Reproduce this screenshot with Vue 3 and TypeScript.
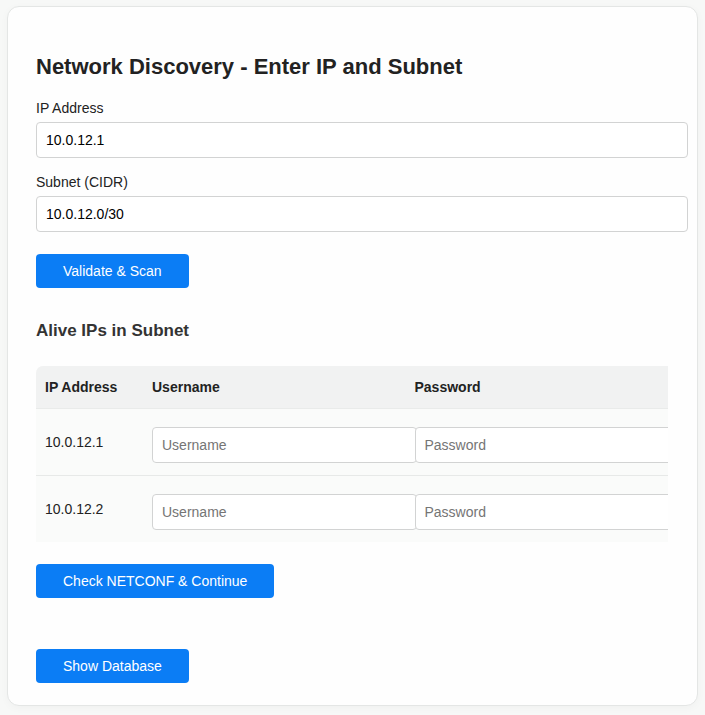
<script setup lang="ts">
import { reactive, ref } from 'vue'

interface Host {
  ip: string
  username: string
  password: string
}

const ipAddress = ref('10.0.12.1')
const subnet = ref('10.0.12.0/30')
const hosts = reactive<Host[]>([
  { ip: '10.0.12.1', username: '', password: '' },
  { ip: '10.0.12.2', username: '', password: '' },
])
</script>

<template>
  <main class="card">
    <h1>Network Discovery - Enter IP and Subnet</h1>
    <form class="scan" @submit.prevent>
      <label for="ip">IP Address</label>
      <input id="ip" v-model="ipAddress" type="text" />
      <label for="subnet">Subnet (CIDR)</label>
      <input id="subnet" v-model="subnet" type="text" />
      <button type="submit">Validate &amp; Scan</button>
    </form>

    <h2>Alive IPs in Subnet</h2>
    <form class="hosts" @submit.prevent>
      <div class="table-wrap">
        <table>
          <thead>
            <tr>
              <th class="ip-col" scope="col">IP Address</th>
              <th scope="col">Username</th>
              <th scope="col">Password</th>
            </tr>
          </thead>
          <tbody>
            <tr v-for="host in hosts" :key="host.ip">
              <td>{{ host.ip }}</td>
              <td>
                <input v-model="host.username" type="text" placeholder="Username" :aria-label="`Username for ${host.ip}`" />
              </td>
              <td>
                <input v-model="host.password" type="password" placeholder="Password" :aria-label="`Password for ${host.ip}`" />
              </td>
            </tr>
          </tbody>
        </table>
      </div>
      <button type="submit">Check NETCONF &amp; Continue</button>
    </form>
    <button class="database" type="button">Show Database</button>
  </main>
</template>

<style>
body {
  margin: 0;
  background: #f7f8f7;
}
</style>

<style scoped>
.card {
  margin: 6px 7px 8px;
  padding: 46px 29px 22px 28px;
  border: 1px solid #e4e6e5;
  border-radius: 12px;
  background: #fefefe;
  box-shadow: 0 2px 8px rgba(0, 0, 0, 0.03);
  color: #222;
  font: 14px/20px "Liberation Sans", Arial, sans-serif;
}

h1 {
  margin: 0 0 17px;
  font-size: 22px;
  line-height: 28px;
}

h2 {
  margin: 33px 0 25px;
  color: #333;
  font-size: 17px;
  line-height: 20px;
}

label {
  display: block;
  margin-bottom: 4px;
}

/* Fields span the full width plus their own padding. */
input {
  display: block;
  box-sizing: content-box;
  width: 100%;
  height: 16px;
  margin: 0;
  padding: 9px;
  border: 1px solid #d2d3d3;
  border-radius: 4px;
  background: #fff;
  color: #000;
  font: inherit;
}

input::placeholder {
  color: #757575;
}

.scan input {
  margin-bottom: 14px;
}

button {
  display: block;
  height: 34px;
  padding: 0 27px;
  border: 0;
  border-radius: 4px;
  background: #0b7df5;
  color: #fff;
  font: inherit;
  cursor: pointer;
}

.scan button {
  margin-top: 22px;
}

.table-wrap {
  overflow: hidden;
  border-radius: 7px 0 0;
}

table {
  width: 100%;
  table-layout: fixed;
  border-collapse: separate;
  border-spacing: 0;
  background: #fafbfa;
}

th,
td {
  padding: 11px 9px;
  text-align: left;
}

th {
  border-bottom: 1px solid #e9ebea;
  background: #f1f2f2;
}

.ip-col {
  width: 89px;
}

td {
  padding: 18px 9px 12px;
}

td:first-child {
  padding: 12px 9px;
}

tbody tr:not(:last-child) td {
  border-bottom: 1px solid #e7e9e8;
}

.hosts button {
  margin-top: 22px;
}

.database {
  margin-top: 51px;
}
</style>
